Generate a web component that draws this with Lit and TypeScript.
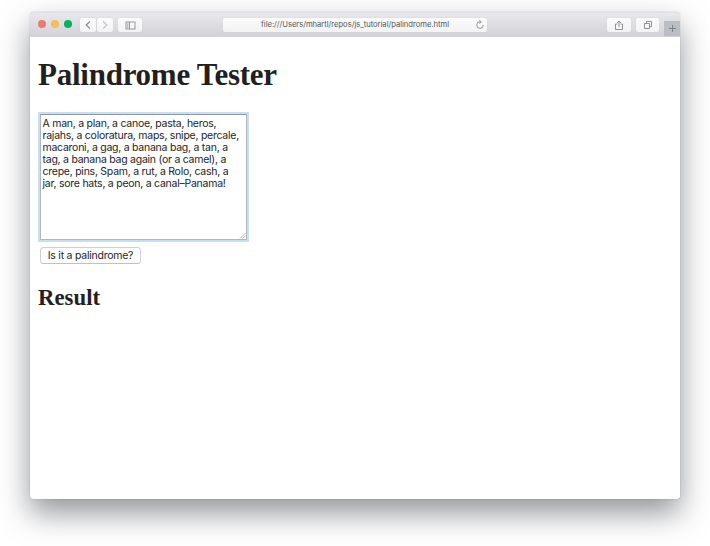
import { LitElement, html, css } from "lit";
import { customElement } from "lit/decorators.js";

const LINES = [
  "A man, a plan, a canoe, pasta, heros,",
  "rajahs, a coloratura, maps, snipe, percale,",
  "macaroni, a gag, a banana bag, a tan, a",
  "tag, a banana bag again (or a camel), a",
  "crepe, pins, Spam, a rut, a Rolo, cash, a",
  "jar, sore hats, a peon, a canal–Panama!",
];

@customElement("browser-toolbar")
export class BrowserToolbar extends LitElement {
  static styles = css`
    :host {
      display: flex;
      box-sizing: border-box;
      height: 25px;
      padding-left: 8px;
      background: linear-gradient(#e8e8ec, #d1d1d7);
      border-radius: 4px 4px 0 0;
      border-top: 1px solid #e2e2e5;
      font-family: Inter, "Liberation Sans", sans-serif;
      overflow: hidden;
    }
    .lights, .nav, .btn, .add { flex: none; }
    .lights { display: flex; gap: 5px; margin-top: 7px; }
    .light { width: 8px; height: 8px; border-radius: 50%; }
    .close { background: #ed7a72; }
    .minimize { background: #f3be5b; }
    .zoom { background: #06b25b; }
    .btn {
      display: flex;
      align-items: center;
      justify-content: center;
      box-sizing: border-box;
      height: 14px;
      margin-top: 5px;
      background: linear-gradient(#fbfbfc, #f3f3f5);
      border-radius: 2px;
      box-shadow: 0 0 1px #c3c3c9;
    }
    .nav { display: flex; gap: 1px; margin-left: 8px; }
    .nav .btn { width: 16px; }
    .nav svg { stroke-width: 1.2; }
    .side { width: 24px; margin-left: 5px; }
    .address { width: 264px; margin-left: 81px; position: relative; }
    .url { font-size: 7.7px; letter-spacing: -0.05px; line-height: 14px; color: #55565b; white-space: nowrap; }
    .reload { position: absolute; right: 2px; top: 2px; }
    .share { width: 24px; margin-left: 120px; }
    .tabs { width: 23px; margin-left: 5px; }
    .add {
      display: flex;
      align-items: center;
      justify-content: center;
      width: 16px;
      height: 15px;
      margin: 8px 0 0 5px;
      background: #bbbdc5;
    }
    svg { display: block; fill: none; stroke-width: 1; }
  `;

  render() {
    return html`
      <div class="lights">
        <span class="light close"></span><span class="light minimize"></span><span class="light zoom"></span>
      </div>
      <div class="nav">
        <span class="btn"><svg width="8" height="10" stroke="#85888e"><path d="M5.9 1.3 2.2 5l3.7 3.7" /></svg></span>
        <span class="btn"><svg width="8" height="10" stroke="#c0c1c5"><path d="M2.1 1.3 5.8 5 2.1 8.7" /></svg></span>
      </div>
      <span class="btn side"><svg width="11" height="9" stroke="#96989d"><rect x="1" y="1" width="9" height="7" /><path d="M4.5 1v7" /><path d="M2.7 2v5" stroke="#bfc1c5" stroke-width="1.5" /></svg></span>
      <div class="btn address">
        <span class="url">file:///Users/mhartl/repos/js_tutorial/palindrome.html</span>
        <svg class="reload" width="10" height="10" stroke="#8a8c91"><path d="M5.3 1.8A3.3 3.3 0 1 0 8.3 5M4.3.4l2 1.5-2 1.5" stroke-width=".9" /></svg>
      </div>
      <span class="btn share"><svg width="10" height="11" stroke="#85878c"><path d="M3.5 4h-2v5.5h7V4h-2M5 7V1.2M3 3l2-2 2 2" stroke-width=".9" /></svg></span>
      <span class="btn tabs"><svg width="10" height="10" stroke="#85878c"><path d="M1.5 3.5h5v5h-5zM3.5 3.5v-2h5v5h-2" stroke-width=".9" /></svg></span>
      <span class="add"><svg width="9" height="9" stroke="#7d8087"><path d="M1 4.5h7M4.5 1v7" /></svg></span>
    `;
  }
}

@customElement("app-root")
export class AppRoot extends LitElement {
  static styles = css`
    :host {
      display: block;
      box-sizing: border-box;
      width: 710px;
      height: 546px;
      padding: 12px 30px 47px;
      background: #fff;
      overflow: hidden;
    }
    .window {
      height: 487px;
      width: 650px;
      background: #fff;
      border-radius: 4px 4px 3px 3px;
      box-shadow: 0 0 1px rgba(60, 62, 70, 0.55), 0 14px 30px rgba(50, 53, 60, 0.53);
    }
    .page { padding: 18px 8px 0; color: #231f20; }
    h1, h2 { font-family: "Liberation Serif", serif; font-weight: 700; margin: 0; white-space: nowrap; }
    h1 { font-size: 31px; letter-spacing: -0.25px; line-height: 40px; }
    h2 { font-size: 22.8px; line-height: 28px; margin-top: 20px; }
    .field {
      position: relative;
      box-sizing: border-box;
      width: 207px;
      height: 126px;
      margin: 19px 0 0 2px;
      padding: 3px 0 0 1.5px;
      border: 1px solid #b4b6ba;
      border-top-color: #94979d;
      box-shadow: 0 0 0 2px #c5dff4;
      font: 10.5px/12.1px Inter, "Liberation Sans", sans-serif;
      letter-spacing: -0.25px;
      color: #222428;
    }
    .line { display: block; white-space: nowrap; }
    .grip { position: absolute; right: 0; bottom: 0; display: block; }
    .check {
      display: block;
      box-sizing: border-box;
      width: 101px;
      height: 17px;
      margin: 7px 0 0 2px;
      padding: 0;
      border: 1px solid #d0d1d5;
      border-bottom-color: #bfc0c4;
      border-radius: 3.5px;
      background: #fff;
      font: 10.5px/14px Inter, "Liberation Sans", sans-serif;
      letter-spacing: -0.24px;
      color: #222428;
      white-space: nowrap;
    }
  `;

  render() {
    return html`
      <div class="window">
        <browser-toolbar></browser-toolbar>
        <div class="page">
          <h1>Palindrome Tester</h1>
          <div class="field">
            ${LINES.map((line) => html`<span class="line">${line}</span>`)}
            <svg class="grip" width="7" height="7" stroke="#9b9da1" stroke-width=".7"><path d="M1 6.5 6.5 1M3.7 6.5l2.8-2.8" /></svg>
          </div>
          <button class="check">Is it a palindrome?</button>
          <h2>Result</h2>
        </div>
      </div>
    `;
  }
}
